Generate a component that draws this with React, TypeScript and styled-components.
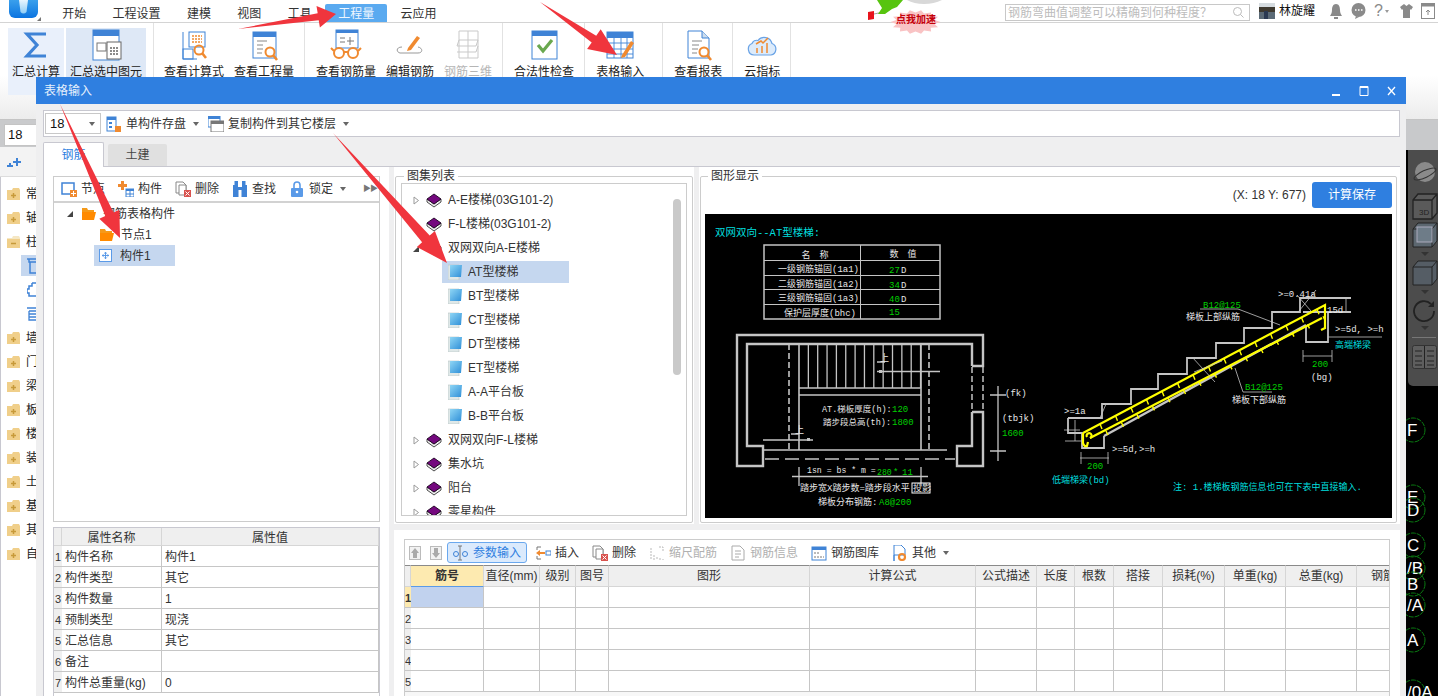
import React from "react";
import styled, { createGlobalStyle } from "styled-components";

const Global = createGlobalStyle`
  html, body { margin: 0; padding: 0; background: #fff; overflow: hidden; }
  * { box-sizing: border-box; }
  body { font: 12px/16px "Liberation Sans", "Noto Sans CJK SC", sans-serif; color: #222; }
`;

const Page = styled.div`position: relative; width: 1438px; height: 696px; overflow: hidden; background: #fff;`;

/* ---------- top bar ---------- */
const TopBar = styled.header`display: flex; align-items: stretch; height: 23px; border-bottom: 1px solid #d4d4d4; background: #fff; padding-right: 3px;`;
const LogoBox = styled.div`width: 49px; flex: none; padding-left: 9px;`;
const Tabs = styled.nav`display: flex; padding-top: 4px; margin-left: 0;`;
const MenuTab = styled.div<{ $active?: boolean }>`
  padding: 2px 13.2px 0;
  color: ${p => (p.$active ? "#eef6ff" : "#333")};
  background: ${p => (p.$active ? "#5aaaf0" : "transparent")};
  border-radius: 2px 2px 0 0;
`;
const SpeedWrap = styled.div`position: relative; width: 75px; margin-left: auto; margin-right: 63px; flex: none;`;
const SpeedArt = styled.svg`position: absolute; left: 0; top: 0; z-index: 2; overflow: visible;`;
const SearchBox = styled.div`
  width: 245px; height: 17px; margin-top: 4px; border: 1px solid #c8c8c8; display: flex; align-items: center;
  justify-content: space-between; padding: 0 4px 0 2px; color: #bcbcbc; flex: none; background: #fff;
`;
const UserName = styled.div`display: flex; align-items: center; gap: 4px; margin-left: 9px; width: 70px; color: #111;`;
const SysIcons = styled.div`display: flex; align-items: center; gap: 8px; color: #8a8a8a;`;
const QMark = styled.span`display: flex; align-items: center; gap: 2px; font-size: 16px; color: #8a8a8a; width: 18px;`;
const TinyCaret = styled.span`width: 0; height: 0; border: 2.5px solid transparent; border-top: 3px solid #999; border-bottom: 0;`;

/* ---------- ribbon ---------- */
const Ribbon = styled.div`
  display: flex; height: 97px; border-bottom: 1px solid #c4c4c4; padding-left: 8px;
  background: linear-gradient(#fff 0, #fff 55%, #ececec 100%);
`;
const RibbonGroup = styled.div<{ $pl?: number; $pr?: number; $gap?: number }>`
  display: flex; gap: ${p => p.$gap ?? 10}px; padding: 5px ${p => p.$pr ?? 10}px 0 ${p => p.$pl ?? 11}px; border-right: 1px solid #e2e2e2; height: 70px;
`;
const RibbonItem = styled.div<{ $bg?: string; $pad?: number; $muted?: boolean }>`
  display: flex; flex-direction: column; align-items: center; gap: 3px; height: 67px; padding: 1px ${p => p.$pad ?? 0}px 0;
  background: ${p => p.$bg ?? "transparent"}; color: ${p => (p.$muted ? "#b5b5b5" : "#222")}; white-space: nowrap;
`;

/* ---------- docks behind the dialog ---------- */
const Under = styled.div`display: flex; justify-content: space-between; height: 576px;`;
const LeftDock = styled.aside`width: 37px; display: flex; flex-direction: column; background: #c9cacc; padding-top: 4px;`;
const FloorInput = styled.div`height: 22px; margin-left: 4px; background: #fff; border: 1px solid #c4c4c4; padding: 2px 0 0 3px; font-size: 13px; color: #111;`;
const SideHead = styled.div`height: 30px; margin-top: 1px; background: #f3f3f3; padding: 9px 0 0 7px; border-bottom: 1px solid #ddd;`;
const SideTree = styled.ul`flex: 1; list-style: none; margin: 0; padding: 5px 0 0; background: #fff; border-left: 1px solid #c8c8d0; overflow: hidden;`;
const SideRow = styled.li<{ $sel?: boolean }>`display: flex; align-items: center; gap: 5px; height: 24px; padding-left: 5px; color: #222; white-space: nowrap;`;
const SideChild = styled.li<{ $sel?: boolean }>`
  display: flex; align-items: center; height: ${p => (p.$sel ? 21 : 24)}px; margin: ${p => (p.$sel ? "1px 0 2px 20px" : "0 0 0 20px")}; padding-left: 6px;
  background: ${p => (p.$sel ? "#c5d7ef" : "transparent")};
`;
const RightDock = styled.aside`width: 32px; display: flex; flex-direction: column; background: #000;`;
const GrayStrip = styled.div`height: 30px; background: #c8c9cb; flex: none;`;
const ViewBar = styled.div`
  height: 236px; margin-left: 2px; background: #4c4c4c; border-radius: 0 0 0 5px; display: flex; flex-direction: column; align-items: flex-start; padding: 10px 0 0 4px; flex: none;
`;
const ViewSep = styled.div`width: 24px; height: 1px; background: #777; margin: 3px 0 7px;`;
const GridArt = styled.svg`display: block; margin-left: -6px; overflow: visible; flex: none;`;

/* ---------- dialog window ---------- */
const Dialog = styled.section`
  position: absolute; left: 36px; top: 77px; width: 1370px; height: 619px; z-index: 3; display: flex; flex-direction: column; background: #efeff0;
`;
const TitleBar = styled.div`height: 27px; flex: none; background: #2f7fe0; color: #e6f0fc; display: flex; align-items: center; padding-left: 8px;`;
const WinButtons = styled.div`display: flex; gap: 15px; margin-left: auto; padding-right: 8px; align-items: center;`;
const DialogBody = styled.div`flex: 1; min-height: 0; display: flex; flex-direction: column; padding: 6px 6px 0 7px;`;
const MainToolbar = styled.div`height: 27px; flex: none; background: #fff; border: 1px solid #c8c8d0; display: flex; align-items: center; gap: 9px; padding-left: 1px;`;
const Combo = styled.div`width: 56px; height: 21px; margin-right: -4px; font-size: 13px; border: 1px solid #c8c8c8; display: flex; align-items: center; justify-content: space-between; padding: 0 5px 0 4px; color: #111;`;
const ToolBtn = styled.div<{ $muted?: boolean; $gap?: number }>`
  display: flex; align-items: center; gap: ${p => p.$gap ?? 4}px; color: ${p => (p.$muted ? "#b0b0b0" : "#333")}; white-space: nowrap; flex: none;
`;
const Caret = styled.span`width: 0; height: 0; border: 3px solid transparent; border-top: 4px solid #666; border-bottom: 0; margin-left: 3px;`;
const TabStrip = styled.div`height: 25px; margin-top: 4px; display: flex; align-items: flex-end; gap: 4px; flex: none;`;
const PageTab = styled.div<{ $active?: boolean }>`
  width: ${p => (p.$active ? 61 : 59)}px; height: ${p => (p.$active ? 25 : 22)}px; display: flex; align-items: center; justify-content: center;
  background: ${p => (p.$active ? "#fff" : "#e0e0e0")}; color: ${p => (p.$active ? "#2f7fe0" : "#444")};
  border: ${p => (p.$active ? "1px solid #c8c8d0" : "0")}; border-bottom: 0; margin-bottom: ${p => (p.$active ? -1 : 0)}px; position: relative; z-index: 1;
  border-radius: 2px 2px 0 0;
`;
const Content = styled.div`flex: 1; min-height: 0; display: grid; grid-template-columns: 345px 1fr; background: #fff; border-top: 1px solid #c8c8d0; border-left: 1px solid #c8c8d0;`;
const LeftCol = styled.div`padding: 9px 9px 0 9px; display: flex; flex-direction: column; border-right: 0;`;
const TreePanel = styled.div`height: 346px; border: 1px solid #ccc; display: flex; flex-direction: column; flex: none;`;
const PanelTools = styled.div`height: 26px; flex: none; border-bottom: 2px solid #d2d2d2; display: flex; align-items: center; gap: 13px; padding-left: 7px;`;
const More = styled.span`margin-left: auto; padding-right: 2px; color: #777; font-size: 8px; letter-spacing: -1px;`;
const TreeBody = styled.div`flex: 1; padding-top: 0; overflow: hidden;`;
const TreeLine = styled.div<{ $indent: number; $sel?: boolean; $width?: number }>`
  display: flex; align-items: center; gap: 7px; height: 21px; margin-left: ${p => p.$indent}px; padding-left: 5px;
  width: ${p => (p.$width ? `${p.$width}px` : "auto")}; background: ${p => (p.$sel ? "#c5d7ef" : "transparent")}; color: #333;
`;
const PropWrap = styled.div`margin-top: 5px; border: 1px solid #c8c8d0; border-bottom: 0; flex: 1; min-height: 0; overflow: hidden; `;
const RightCol = styled.div`border-left: 5px solid #efeff0; display: flex; flex-direction: column; min-width: 0;`;
const TopRow = styled.div`height: 357px; flex: none; display: flex;`;
const MidCol = styled.div`width: 300px; flex: none; padding: 2px 1px 0;`;
const Splitter = styled.div`width: 5px; flex: none; background: #efeff0;`;
const ShowCol = styled.div`flex: 1; min-width: 0; padding: 2px 3px 0 1px;`;
const Group = styled.fieldset<{ $pad: number }>`margin: 0; height: 354px; border: 1px solid #ccc; border-radius: 2px; min-width: 0; padding: 0 ${p => p.$pad}px 6px; display: flex; flex-direction: column;`;
const GroupTitle = styled.legend`margin-left: 3px; padding: 0 3px; line-height: 14px; color: #333;`;
const ListBox = styled.div`position: relative; flex: 1; min-height: 0; border: 1px solid #ccc; padding-top: 4px; overflow: hidden; display: flex; flex-direction: column;`;
const ListRow = styled.div`display: flex; flex: none; align-items: center; height: 24px; padding-left: 11px; color: #333; white-space: nowrap;`;
const Spacer = styled.span<{ $w: number }>`display: inline-block; width: ${p => p.$w}px; flex: none;`;
const ListLabel = styled.span`margin-left: 6px;`;
const ListChild = styled.div<{ $sel?: boolean }>`
  display: flex; flex: none; align-items: center; gap: 5px; height: 22px; margin: 1px 0 1px 40px; width: 127px; padding-left: 6px; color: #333;
  background: ${p => (p.$sel ? "#c5d7ef" : "transparent")};
`;
const ScrollThumb = styled.div`position: absolute; right: 5px; top: 15px; width: 8px; height: 176px; border-radius: 4px; background: #c9c9c9;`;
const ShowHead = styled.div`height: 26px; flex: none; display: flex; justify-content: flex-end; align-items: center; gap: 6px; margin-top: -1px; color: #333;`;
const SaveBtn = styled.div`width: 80px; height: 26px; border-radius: 3px; background: #2f7fe0; color: #fff; display: flex; align-items: center; justify-content: center;`;
const Drawing = styled.svg`display: block; margin-top: 6px; background: #000; flex: none;`;
const HSplit = styled.div`height: 6px; flex: none; background: #efeff0;`;
const BottomPanel = styled.div`flex: 1; min-height: 0; padding: 9px 10px 0; background: #fff;`;
const BarBox = styled.div`height: 100%; border: 1px solid #ccc; border-bottom: 0; overflow: hidden; background: #f7f7f7;`;
const GridTools = styled.div`height: 25px; background: #fff; display: flex; align-items: center; padding-left: 4px;`;
const UpDown = styled.div`display: flex; gap: 9px; margin-right: 5px;`;
const ActiveBtn = styled.div`
  width: 80px; height: 21px; margin-right: 8px; border: 1px solid #6aa8ee; border-radius: 3px; background: #dbeafc; color: #2f7fe0;
  display: flex; align-items: center; gap: 4px; padding-left: 4px; flex: none;
`;
const ToolRun = styled.div`display: flex; align-items: center; gap: 13px;`;
const DataTable = styled.table<{ $w: number }>`
  table-layout: fixed; width: ${p => p.$w}px; border-collapse: separate; border-spacing: 0; background: #fff;
  font-size: 12px; line-height: 14px;
`;
const Th = styled.th<{ $hl?: boolean }>`
  height: 18px; padding: 2px 0 0; font-weight: ${p => (p.$hl ? 700 : 400)}; color: #333; white-space: nowrap; overflow: hidden;
  background: ${p => (p.$hl ? "#fdeab0" : "#efefef")}; border-right: 1px solid #d6d6d6; border-bottom: 1px solid ${p => (p.$hl ? "#5a9ae8" : "#d6d6d6")};
`;
const DarkTh = styled(Th)`height: 22px; padding: 0; border-top: 1px solid #8a8a8a;`;
const Td = styled.td<{ $sel?: boolean }>`
  height: 21px; padding: 2px 0 0 3px; color: #333; white-space: nowrap; overflow: hidden;
  background: ${p => (p.$sel ? "#c1d2ee" : "#fff")}; border-right: 1px solid #c6c6c6; border-bottom: 1px solid #c6c6c6;
`;
const NumTd = styled.td<{ $hl?: boolean }>`
  padding: 2px 0 0; height: 21px; overflow: hidden; text-align: center; background: ${p => (p.$hl ? "#fdeab0" : "#efefef")}; font-weight: ${p => (p.$hl ? 700 : 400)};
  color: #333; border-bottom: 1px solid #c6c6c6; font-size: 11px;
`;
const ArrowLayer = styled.svg`position: absolute; left: 0; top: 0; z-index: 5; pointer-events: none;`;

/* ---------- icons ---------- */
const B = "#3f83d6", O = "#f08a30";
const Ico = ({ s = 32, children }: { s?: number; children: React.ReactNode }) => (
  <svg width={s} height={s} viewBox="0 0 32 32" style={{ flex: "none", display: "block" }}>{children}</svg>
);
const Lens = ({ x = 22, y = 23 }: { x?: number; y?: number }) => (
  <g fill="none" stroke={O} strokeWidth="2"><circle cx={x} cy={y} r="4.5" /><path d={`M${x + 3} ${y + 3}l4 5`} strokeWidth="2.6" /></g>
);
const Doc = () => (
  <g><rect x="5" y="3" width="23" height="26" fill="#fff" stroke={B} /><rect x="5" y="3" width="23" height="5" fill={B} />
    <path d="M9 12h10M9 16h6M9 20h6M9 24h5" stroke="#888" /></g>
);
const icons: Record<string, React.ReactNode> = {
  sum: <Ico><path d="M26 5H7l10 11L7 27h19" fill="none" stroke={B} strokeWidth="3.2" /></Ico>,
  calc: <Ico><rect x="3" y="1" width="26" height="30" fill="#fff" stroke={B} /><rect x="3" y="1" width="26" height="6" fill={B} /><rect x="7" y="14" width="9" height="8" fill="none" stroke="#777" /><rect x="17" y="13" width="14" height="17" fill="#fff" stroke="#666" /><path d="M20 19h8M20 22h8M20 25h8" stroke="#666" strokeDasharray="2 1" strokeWidth="1.6" /></Ico>,
  formula: <Ico><path d="M5 3v27h14" fill="none" stroke={B} /><rect x="5" y="20" width="10" height="10" fill="none" stroke={B} /><rect x="11" y="3" width="16" height="15" fill="#fff" stroke={B} /><path d="M14 7h10M14 10h10M14 13h10" stroke={O} strokeWidth="1.6" strokeDasharray="2 1" /><Lens x={21} y={21} /></Ico>,
  qty: <Ico><Doc /><Lens /></Ico>,
  rebar: <Ico><rect x="6" y="1" width="22" height="18" fill="#fff" stroke={B} /><rect x="6" y="1" width="22" height="3" fill={B} /><path d="M10 9h5M10 13h5M20 8v8M17 12h7" stroke="#777" /><g fill="none" stroke={O} strokeWidth="2"><circle cx="9" cy="24" r="5" /><circle cx="23" cy="24" r="5" /><path d="M14 23h4M4 22L1 19M28 22l3-3" /></g></Ico>,
  edit: <Ico><path d="M6 24c-4-1-4-6 2-6M17 24H6M24 18c5 1 5 6 0 6h-7" fill="none" stroke="#999" /><path d="M14 19l9-12 3 2-9 12-4 1z" fill={O} /></Ico>,
  rebar3d: <Ico><path d="M7 2v27M16 2v27M26 2v27M7 2h19M7 11l-2 6h19l2-6zM5 23h19l2-6M7 29h19" fill="none" stroke="#c9c9c9" /></Ico>,
  check: <Ico><rect x="4" y="2" width="25" height="28" fill="#fff" stroke={B} /><rect x="4" y="2" width="25" height="5" fill={B} /><path d="M10 16l5 6 9-11" fill="none" stroke="#6aa84f" strokeWidth="3.2" /></Ico>,
  table: <Ico><rect x="3" y="3" width="26" height="26" fill="#fff" stroke={B} /><rect x="3" y="3" width="26" height="6" fill={B} /><path d="M3 14h26M3 20h26M3 25h26M10 9v20M17 9v20M23 9v20" stroke={B} strokeWidth=".9" /><path d="M18 26l9-14 3 2-9 14-4 1z" fill={O} /></Ico>,
  report: <Ico><path d="M6 2h14l7 7v20H6z" fill="#fff" stroke={B} /><path d="M20 2v7h7" fill="#cde" stroke={B} /><path d="M10 12h10M10 16h7M10 20h6M10 24h5" stroke="#888" /><Lens /></Ico>,
  cloud: <Ico><path d="M8 26a6 6 0 0 1-2-11.5 5 5 0 0 1 6-3 8 8 0 0 1 14 3 6 6 0 0 1-1 11.5z" fill="#dcebfb" stroke="#6aa3e6" strokeWidth="1.2" /><path d="M11 24v-5M16 24v-7M21 24v-10M10 15l5-3 2 2 5-5" fill="none" stroke={O} strokeWidth="1.5" /></Ico>,
};

const S = ({ children }: { children: React.ReactNode }) => (
  <svg width="16" height="16" viewBox="0 0 16 16" style={{ flex: "none", display: "block" }}>{children}</svg>
);
const tool: Record<string, React.ReactNode> = {
  node: <S><rect x="1" y="2" width="12" height="11" fill="none" stroke={B} strokeWidth="1.5" /><rect x="9" y="9" width="7" height="7" fill={O} /><path d="M12.5 10v5M10 12.5h5" stroke="#fff" /></S>,
  part: <S><path d="M3 0h3v3h3v3H6v3H3V6H0V3h3z" fill={O} /><rect x="8" y="8" width="8" height="8" fill="#fff" stroke={B} /><rect x="8" y="8" width="8" height="2" fill={B} /><path d="M12 10v6M8 13h8" stroke={B} /></S>,
  del: <S><path d="M1 1h7l3 3v8H1z" fill="#fff" stroke="#888" /><path d="M4 4h7v10H4z" fill="#fff" stroke="#888" /><rect x="9" y="9" width="7" height="7" fill="#d9534f" /><path d="M10.5 10.5l4 4M14.5 10.5l-4 4" stroke="#fff" /></S>,
  find: <S><path d="M1 4h5v2h4V4h5v12H9.5V9h-3v7H1z" fill={B} /><rect x="2.5" y="0" width="3.5" height="4" fill={B} /><rect x="10" y="0" width="3.5" height="4" fill={B} /></S>,
  lock: <S><rect x="2" y="7" width="12" height="9" rx="1" fill="#5a9ae8" /><path d="M5 7V4a3 3 0 0 1 6 0v3" fill="none" stroke="#5a9ae8" strokeWidth="1.6" /><circle cx="8" cy="11" r="1.3" fill="#fff" /></S>,
  save: <S><rect x="1" y="1" width="9" height="14" fill="#fff" stroke={B} /><rect x="1" y="1" width="9" height="3" fill={B} /><rect x="3" y="6" width="3" height="2" fill={B} /><rect x="3" y="10" width="3" height="2" fill={B} /><rect x="9" y="10" width="6" height="6" fill={O} /></S>,
  copy: <S><rect x="0" y="0" width="12" height="11" fill="#fff" stroke={B} /><rect x="0" y="0" width="12" height="3" fill={B} /><rect x="3" y="5" width="13" height="11" fill="#fff" stroke="#777" /><rect x="3" y="5" width="13" height="3" fill="#777" /></S>,
  insert: <S><path d="M2 2h4M2 14h4M2 2v3M2 11v3" stroke="#777" fill="none" /><path d="M1 8l4-3v2h5v2H5v2z" fill={O} /><rect x="11" y="6" width="5" height="4" fill="#fff" stroke={B} /></S>,
  scale: <S><path d="M2 3v12M5 10v5M8 12v3M11 13v2M14 14v1M10 2h4v4" stroke="#b9b9b9" fill="none" strokeDasharray="2 1" /></S>,
  info: <S><path d="M2 1h8l4 4v10H2z" fill="#fff" stroke="#aaa" /><path d="M5 6h6M5 9h6M5 12h4" stroke="#aaa" /></S>,
  lib: <S><rect x="1" y="2" width="14" height="13" fill="#fff" stroke={B} /><rect x="1" y="2" width="14" height="3" fill={B} /><path d="M3 8h5M3 12h10" stroke="#777" strokeDasharray="2 1" /></S>,
  other: <S><path d="M2 0h7l4 4v6H2v6" fill="#fff" stroke={B} /><path d="M2 0v16" stroke={B} /><circle cx="10" cy="12" r="3" fill="none" stroke={O} strokeWidth="2.2" /></S>,
};

const PlusFolder = ({ open }: { open?: boolean }) => (
  <svg width="15" height="14" viewBox="0 0 15 14" style={{ flex: "none" }}>
    <path d="M1 3h5l1-2h6l1 2v10H1z" fill={open ? "#f5e7c4" : "#f0cf8a"} />
    <rect x="1" y="4" width="13" height="9" fill="#f0cf8a" />
    <path d={open ? "M5 8.5h5" : "M5 8.5h5M7.5 6v5"} stroke="#c79a3a" strokeWidth="1.5" />
  </svg>
);
const OrangeFolder = () => (
  <svg width="15" height="13" viewBox="0 0 15 13" style={{ flex: "none" }}>
    <path d="M1 1h5l1 2h6v2H1z" fill="#f59a1a" /><path d="M1 5h14l-2 8H1z" fill="#ff8a00" />
  </svg>
);
const PartIcon = () => (
  <svg width="14" height="14" viewBox="0 0 14 14" style={{ flex: "none" }}>
    <rect x=".5" y=".5" width="12" height="12" fill="#fff" stroke="#5a9ae8" /><path d="M6.5 3v7M3 6.5h7" stroke="#5a9ae8" /><circle cx="6.5" cy="6.5" r="2.5" fill="none" stroke="#5a9ae8" strokeDasharray="1 1" />
  </svg>
);
const Book = () => (
  <svg width="16" height="15" viewBox="0 0 16 15" style={{ flex: "none" }}>
    <path d="M1 6v3l7 5 7-5V6l-7 5z" fill="#eee" stroke="#222" strokeWidth=".8" />
    <path d="M1 6l7-5 7 5-7 5z" fill="#74087e" stroke="#1c0620" strokeWidth=".9" />
  </svg>
);
const Note = () => (
  <svg width="15" height="16" viewBox="0 0 15 16" style={{ flex: "none" }}>
    <defs><linearGradient id="nt" x1="0" x2="1" y1="0" y2="1"><stop offset="0" stopColor="#8fd6f5" /><stop offset="1" stopColor="#2f8fd8" /></linearGradient></defs>
    <path d="M0 1h11v15H0z" fill="#dfe8e8" stroke="#b8c4c4" strokeWidth=".6" /><path d="M2 1h12l-1 12H2z" fill="url(#nt)" />
  </svg>
);
const Tri = ({ open }: { open?: boolean }) => (
  <svg width="7" height="9" viewBox="0 0 7 9" style={{ flex: "none" }}>
    {open ? <path d="M0 8l6-6v6z" fill="#444" /> : <path d="M1 1l4.5 3.5L1 8z" fill="#fff" stroke="#999" />}
  </svg>
);

/* ---------- data ---------- */
const ribbon = [
  { pl: 0, pr: 7, gap: 2, items: [{ k: "sum", t: "汇总计算", bg: "#e9f0fb", pad: 4 }, { k: "calc", t: "汇总选中图元", bg: "#dee8f6", pad: 4 }] },
  { pl: 10, items: [{ k: "formula", t: "查看计算式" }, { k: "qty", t: "查看工程量" }] },
  { items: [{ k: "rebar", t: "查看钢筋量" }, { k: "edit", t: "编辑钢筋" }, { k: "rebar3d", t: "钢筋三维", muted: true }] },
  { items: [{ k: "check", t: "合法性检查" }] },
  { pr: 18, items: [{ k: "table", t: "表格输入" }] },
  { items: [{ k: "report", t: "查看报表" }] },
  { items: [{ k: "cloud", t: "云指标" }] },
] as { pl?: number; pr?: number; gap?: number; items: { k: string; t: string; bg?: string; pad?: number; muted?: boolean }[] }[];

const gridCols: [string, number][] = [["", 6], ["筋号", 73], ["直径(mm)", 56], ["级别", 36], ["图号", 33], ["图形", 201], ["计算公式", 166], ["公式描述", 61], ["长度", 38], ["根数", 39], ["搭接", 49], ["损耗(%)", 62], ["单重(kg)", 61], ["总重(kg)", 71], ["钢筋", 53]];
const props = [["构件名称", "构件1"], ["构件类型", "其它"], ["构件数量", "1"], ["预制类型", "现浇"], ["汇总信息", "其它"], ["备注", ""], ["构件总重量(kg)", "0"]];

/* ---------- red arrows ---------- */
const arrowPts = (x1: number, y1: number, x2: number, y2: number, head = 24, wing = 12, shaft = 4.5) => {
  const dx = x2 - x1, dy = y2 - y1, l = Math.hypot(dx, dy), ux = dx / l, uy = dy / l, nx = -uy, ny = ux;
  const bx = x2 - ux * head, by = y2 - uy * head;
  const p = (x: number, y: number) => `${x.toFixed(1)},${y.toFixed(1)}`;
  return [p(x1, y1), p(bx + nx * shaft, by + ny * shaft), p(bx + nx * wing, by + ny * wing), p(x2, y2), p(bx - nx * wing, by - ny * wing), p(bx - nx * shaft, by - ny * shaft)].join(" ");
};

/* ---------- CAD drawing ---------- */
const CW = "#e6e6e6", CG = "#00cf00", CC = "#00dede", CL = "#c4c4c4";
const T = ({ x, y, c = CW, s = 9, children, a }: { x: number; y: number; c?: string; s?: number; children: React.ReactNode; a?: "middle" }) => (
  <text x={x} y={y} fill={c} fontSize={s} textAnchor={a} fontFamily={'"Liberation Mono", "Noto Sans CJK SC", monospace'}>{children}</text>
);
const stairs = "M1068 418H1102V404H1131V389H1158V374H1187V358H1216V343H1244V328H1272V312H1300V298H1351M1303 312H1351M1068 418V433H1082V448H1104V436M1306 325V342H1328V312";
const treads = Array.from({ length: 13 }, (_, i) => 799 + (i + 1) * 9.35);
const ticks = Array.from({ length: 15 }, (_, i) => i);

const CadDrawing = () => (
  <Drawing width={687} height={304} viewBox="705 214 687 304">
    <T x={715} y={236} c={CC} s={10.5}>双网双向--AT型楼梯:</T>
    <g fill="none" stroke={CL}>
      <rect x="764" y="245" width="176" height="74" strokeWidth="1.5" />
      <path d="M860.5 245V319M764 260.5H940M764 275.5H940M764 289.5H940M764 304.5H940" />
    </g>
    <T x={815} y={258} a="middle">名　称</T><T x={903} y={257} a="middle">数　值</T>
    {[["一级钢筋锚固(1a1)", "27", 272], ["二级钢筋锚固(1a2)", "34", 287], ["三级钢筋锚固(1a3)", "40", 301]].map(([a, b, y]) => (
      <g key={a as string}><T x={778} y={(y as number)}>{a}</T><T x={889} y={(y as number) + 1} c={CG}>{b}</T><T x={901} y={(y as number) + 1}>D</T></g>
    ))}
    <T x={784} y={316}>保护层厚度(bhc)</T><T x={889} y={315} c={CG}>15</T>

    <g fill="none" stroke={CL} strokeWidth="2.4">
      <path d="M972 366H983V335H737V466H763V446H747V344H972V366" />
      <path d="M972 412H983V466H957V446H972V412" />
      <path d="M972 367V411M983 367V411" strokeDasharray="6 3" strokeWidth="1.5" />
    </g>
    <g fill="none" stroke={CL} strokeWidth="1.3">
      <path d="M799 344V450M921 344V450" strokeWidth="1.6" />
      <path d="M789 344V450M929 344V450" strokeDasharray="6 3" strokeWidth="1.6" />
      {treads.map(x => <path key={x} d={`M${x} 344V388`} />)}
      <path d="M799 388H921M799 395H921" strokeWidth="1.6" />
      <path d="M763 450H947" /><path d="M765 459H955" strokeDasharray="14 6" />
      <path d="M877 371.5H940M877 362H885M763 440H813M791 434H799" />
      <path d="M998 386V461M990 395H1006M990 451H1006M799 467V486M921 467V486M792 476.5H928" />
    </g>
    <rect x="879" y="370" width="3" height="3" fill={CL} /><rect x="807" y="438" width="3" height="3" fill={CL} />
    <T x={880} y={361}>上</T><T x={795} y={433}>上</T>
    <T x={822} y={412} s={8.5}>AT.梯板厚度(h):</T><T x={892} y={412} c={CG}>120</T>
    <T x={823} y={425} s={8.5}>踏步段总高(th):</T><T x={892} y={425} c={CG}>1800</T>
    <T x={1005} y={396}>(fk)</T><T x={1002} y={421}>(tbjk)</T><T x={1002} y={436} c={CG}>1600</T>
    <T x={807} y={473} s={8.2}>1sn = bs * m =</T><T x={877} y={475} s={8.2} c={CG}>280</T><T x={893} y={475} c={CG}>*</T><T x={902} y={475} c={CG}>11</T>
    <T x={800} y={491}>踏步宽X踏步数=踏步段水平</T><rect x="912" y="483" width="18" height="10" fill="none" stroke="#fff" /><T x={913} y={491}>投影</T>
    <T x={818} y={505}>梯板分布钢筋:</T><T x={879} y={505} c={CG}>A8@200</T>

    <path d={stairs} fill="none" stroke={CL} strokeWidth="1.8" />
    <path d="M1104 436L1306 325" fill="none" stroke={CL} strokeWidth="2.4" />
    <g fill="none" stroke="#ffff00" strokeWidth="2.2">
      <path d="M1083 433L1325 305V328L1321 330" /><path d="M1090 438L1322 318" />
      <path d="M1083 433V443Q1084 447 1087 446L1088 442" /><path d="M1090 438a2.5 2.5 0 1 0 -3 -1" />
      {ticks.map(i => { const x = 1100 + i * 15.5, y = 424 - i * 8.2; return <path key={i} strokeWidth="1.4" d={`M${x} ${y}l2 5M${x + 8} ${y + 11}l-2-4`} />; })}
    </g>
    <g fill="none" stroke={CL} strokeWidth=".8">
      <path d="M1200 309H1238L1280 325M1235 368L1243 392H1272M1303 356H1332M1303 350V362M1332 350V362M1080 458H1109M1081 452V464M1108 452V464M1328 337H1382" />
      <path d="M1192 357L1215 382M1194 372L1222 361M1297 295L1311 311M1299 311L1316 290M1106 404L1100 418M1064 430H1080M1075 420V441M1065 441H1082M1346 298V312M1334 298H1351" />
    </g>
    <T x={1203} y={308} c={CG}>B12@125</T><T x={1186} y={320}>梯板上部纵筋</T>
    <T x={1278} y={297}>&gt;=0.41a</T><T x={1327} y={313}>15d</T>
    <T x={1335} y={332}>&gt;=5d, &gt;=h</T><T x={1335} y={348} c={CC}>高端梯梁</T>
    <T x={1312} y={367} c={CG}>200</T><T x={1311} y={380}>(bg)</T>
    <T x={1245} y={390} c={CG}>B12@125</T><T x={1232} y={403}>梯板下部纵筋</T>
    <T x={1064} y={414}>&gt;=1a</T><T x={1112} y={452}>&gt;=5d,&gt;=h</T>
    <T x={1087} y={469} c={CG}>200</T><T x={1052} y={483} c={CC}>低端梯梁(bd)</T>
    <T x={1173} y={490} c={CC}>注: 1.楼梯板钢筋信息也可在下表中直接输入.</T>
  </Drawing>
);

/* ---------- App ---------- */
const burst = Array.from({ length: 28 }, (_, i) => {
  const a = (i / 28) * Math.PI * 2, k = i % 2 ? 0.78 : 1;
  return `${(48.5 + Math.cos(a) * 25 * k).toFixed(1)},${(22 + Math.sin(a) * 12 * k).toFixed(1)}`;
}).join(" ");

export default function App() {
  return (
    <Page>
      <Global />
      <TopBar>
        <LogoBox>
          <svg width="40" height="23" viewBox="0 0 40 23">
            <defs>
              <linearGradient id="lg" x1="0" x2="0" y1="0" y2="1"><stop offset="0" stopColor="#3aa0ec" /><stop offset="1" stopColor="#0b74e0" /></linearGradient>
              <linearGradient id="lw" x1="0" x2="0" y1="0" y2="1"><stop offset="0" stopColor="#e8f6ff" /><stop offset="1" stopColor="#8fcdf5" /></linearGradient>
            </defs>
            <path d="M0 0h29v12a6 6 0 0 1-6 6H6a6 6 0 0 1-6-6z" fill="url(#lg)" />
            <path d="M10 0h9l-1.5 12q-3 3-6 0z" fill="url(#lw)" /><path d="M28 21h4v-4z" fill="#777" />
          </svg>
        </LogoBox>
        <Tabs>
          {["开始", "工程设置", "建模", "视图", "工具", "工程量", "云应用"].map(t => <MenuTab key={t} $active={t === "工程量"}>{t}</MenuTab>)}
        </Tabs>
        <SpeedWrap>
          <SpeedArt width="75" height="36" viewBox="0 0 75 36">
            <path d="M1 12l6-1 0 8-6 1z" fill="#e8141c" />
            <path d="M7 14l14-3" stroke="#888" strokeWidth=".8" />
            <path d="M10 0h26l-6 7-5 2-7 5-7 0 4-6z" fill="#57c40f" />
            <path d="M40 0h35q-8 4-18 4-10 0-17-4z" fill="#d8d8d8" />
            <polygon points={burst} fill="#f9c3c4" />
            <text x="49" y="23" fill="#c4000a" fontSize="10" fontWeight="700" textAnchor="middle" fontFamily={'"Noto Sans CJK SC", sans-serif'}>点我加速</text>
          </SpeedArt>
        </SpeedWrap>
        <SearchBox>
          <span>钢筋弯曲值调整可以精确到何种程度？</span>
          <svg width="13" height="13" viewBox="0 0 13 13"><circle cx="5.5" cy="5.5" r="4" fill="none" stroke="#bbb" /><path d="M8.5 8.5l3 3" stroke="#bbb" /></svg>
        </SearchBox>
        <UserName>
          <svg width="16" height="16" viewBox="0 0 16 16" style={{ flex: "none" }}>
            <rect width="16" height="16" fill="#d6dce0" /><rect y="4" width="16" height="5" fill="#3f3a30" /><rect y="9" width="16" height="7" fill="#5b6a76" /><rect x="5" y="8" width="4" height="8" fill="#2b3a52" />
          </svg>
          <span>林旋耀</span>
        </UserName>
        <SysIcons>
          <svg width="14" height="17" viewBox="0 0 14 17"><path d="M7 1c3 0 4 3 4 6 0 3 1 4 2 6H1c1-2 2-3 2-6 0-3 1-6 4-6z" fill="#8a8a8a" /><rect x="5" y="14" width="4" height="2" fill="#8a8a8a" /></svg>
          <svg width="15" height="16" viewBox="0 0 15 16"><circle cx="7.5" cy="7" r="7" fill="#8a8a8a" /><path d="M5 13l-1 3 4-2z" fill="#8a8a8a" /><path d="M4 7h1.5M7 7h1.5M10 7h1.5" stroke="#fff" strokeWidth="1.5" /></svg>
          <QMark>?<TinyCaret /></QMark>
          <svg width="13" height="14" viewBox="0 0 13 14"><path d="M4 0l2.5 2L9 0l4 3-2 3-1-1v9H3V5L2 6 0 3z" fill="#8a8a8a" /></svg>
          <svg width="14" height="16" viewBox="0 0 14 16"><rect x=".5" y=".5" width="13" height="15" fill="#fff" stroke="#8a8a8a" /><rect x=".5" y=".5" width="13" height="3" fill="#8a8a8a" /><path d="M7 12V7M5 9l2-2 2 2" fill="none" stroke="#8a8a8a" /></svg>
        </SysIcons>
      </TopBar>

      <Ribbon>
        {ribbon.map((g, i) => (
          <RibbonGroup key={i} $pl={g.pl} $pr={g.pr} $gap={g.gap}>
            {g.items.map(it => (
              <RibbonItem key={it.t} $bg={it.bg} $pad={it.pad} $muted={it.muted}>
                {icons[it.k]}
                <span>{it.t}</span>
              </RibbonItem>
            ))}
          </RibbonGroup>
        ))}
      </Ribbon>

      <Under>
        <LeftDock>
          <FloorInput>18</FloorInput>
          <SideHead>
            <svg width="14" height="10" viewBox="0 0 14 10"><path d="M9 0h2v3h3v2h-3v3H9V5H6V3h3z" fill="#3f83d6" /><path d="M2 5h2v2h2v2H0V7h2z" fill="#3f83d6" /></svg>
          </SideHead>
          <SideTree>
            <SideRow><PlusFolder /><span>常</span></SideRow>
            <SideRow><PlusFolder /><span>轴</span></SideRow>
            <SideRow><PlusFolder open /><span>柱</span></SideRow>
            <SideChild $sel><svg width="10" height="16" viewBox="0 0 10 16"><path d="M0 1h10M2 1v3h8M3 4v11h7" fill="none" stroke="#3f83d6" strokeWidth="1.5" /></svg></SideChild>
            <SideChild><svg width="10" height="16" viewBox="0 0 10 16"><path d="M5 1h5M5 1v3H2v3H0v4h2v3h8" fill="none" stroke="#3f83d6" strokeWidth="1.5" /></svg></SideChild>
            <SideChild><svg width="10" height="16" viewBox="0 0 10 16"><path d="M0 2h10M2 5h8M2 5v9h8M2 8h8M2 11h8" fill="none" stroke="#3f83d6" strokeWidth="1.3" /></svg></SideChild>
            {["墙", "门", "梁", "板", "楼", "装", "土", "基", "其", "自"].map(t => (
              <SideRow key={t}><PlusFolder /><span>{t}</span></SideRow>
            ))}
          </SideTree>
        </LeftDock>
        <RightDock>
          <GrayStrip />
          <ViewBar>
            <svg width="26" height="32" viewBox="0 0 26 32"><circle cx="13" cy="12" r="10" fill="#8a8a8a" /><ellipse cx="13" cy="14" rx="12" ry="3.5" fill="none" stroke="#333" transform="rotate(-25 13 14)" /></svg>
            <svg width="26" height="30" viewBox="0 0 26 30"><path d="M1 8l5-6h19v19l-5 6H1zM1 8h19v19M20 8l5-6" fill="#5a5a5a" stroke="#222" strokeWidth="1.3" /><text x="7" y="23" fill="#222" fontSize="8" fontFamily="Liberation Sans">3D</text></svg>
            <svg width="26" height="26" viewBox="0 0 26 26"><path d="M1 7l5-6h19v18l-5 6H1z" fill="#5c6770" stroke="#222" /><path d="M1 7h19v18M20 7l5-6" fill="none" stroke="#222" /><rect x="5" y="5" width="15" height="15" fill="#6e7c88" stroke="#aab" /></svg>
            <svg width="26" height="12" viewBox="0 0 26 12"><path d="M9 4h8l-4 4z" fill="#333" /></svg>
            <svg width="26" height="26" viewBox="0 0 26 26"><path d="M1 7l5-6h19v18l-5 6H1z" fill="#555d65" stroke="#222" /><path d="M1 7h19v18M20 7l5-6" fill="none" stroke="#222" /></svg>
            <svg width="26" height="12" viewBox="0 0 26 12"><path d="M9 4h8l-4 4z" fill="#333" /></svg>
            <svg width="26" height="26" viewBox="0 0 26 26"><path d="M22 13a10 10 0 1 1-3-7" fill="none" stroke="#222" strokeWidth="1.8" /><path d="M22 3v6h-6z" fill="#222" /></svg>
            <svg width="26" height="10" viewBox="0 0 26 10"><path d="M9 2h8l-4 4z" fill="#333" /></svg>
            <ViewSep />
            <svg width="26" height="24" viewBox="0 0 26 24"><rect x=".5" y=".5" width="24" height="23" rx="2" fill="#5e5e5e" stroke="#333" /><path d="M12.5 1v22M3 6h7M15 6h7M3 11h7M15 11h7M3 16h7M15 16h7M3 20h7M15 20h7" stroke="#222" /></svg>
          </ViewBar>
          <GridArt width="38" height="310" viewBox="1400 386 38 310">
            {([[430, "F"], [497, "E"], [510, "D"], [545, "C"], [568, "/B"], [584, "B"], [605, "/A"], [640, "A"], [692, "/0A"]] as [number, string][]).map(([y, t]) => (
              <g key={y}>
                <circle cx="1413" cy={y} r="12" fill="none" stroke="#0a7a12" strokeDasharray="5 1" />
                <text x="1407" y={y + 6} fill="#fff" fontSize="17" fontFamily={'"Liberation Sans", sans-serif'}>{t}</text>
              </g>
            ))}
          </GridArt>
        </RightDock>
      </Under>

      <Dialog>
        <TitleBar>
          <span>表格输入</span>
          <WinButtons>
            <svg width="13" height="12" viewBox="0 0 13 12"><rect x="3" y="9" width="8" height="2" fill="#fff" /></svg>
            <svg width="13" height="12" viewBox="0 0 13 12"><path d="M3 1.5h8v9H3z" fill="none" stroke="#fff" /><rect x="3" y="1" width="8" height="2" fill="#fff" /></svg>
            <svg width="13" height="12" viewBox="0 0 13 12"><path d="M3 2l7 8M10 2l-7 8" stroke="#fff" strokeWidth="1.3" /></svg>
          </WinButtons>
        </TitleBar>
        <DialogBody>
          <MainToolbar>
            <Combo><span>18</span><Caret /></Combo>
            <ToolBtn>{tool.save}<span>单构件存盘</span><Caret /></ToolBtn>
            <ToolBtn>{tool.copy}<span>复制构件到其它楼层</span><Caret /></ToolBtn>
          </MainToolbar>
          <TabStrip>
            <PageTab $active>钢筋</PageTab>
            <PageTab>土建</PageTab>
          </TabStrip>
          <Content>
            <LeftCol>
              <TreePanel>
                <PanelTools>
                  <ToolBtn>{tool.node}<span>节点</span></ToolBtn>
                  <ToolBtn>{tool.part}<span>构件</span></ToolBtn>
                  <ToolBtn>{tool.del}<span>删除</span></ToolBtn>
                  <ToolBtn>{tool.find}<span>查找</span></ToolBtn>
                  <ToolBtn>{tool.lock}<span>锁定</span><Caret /></ToolBtn>
                  <More>▶▶</More>
                </PanelTools>
                <TreeBody>
                  <TreeLine $indent={8}><Tri open /><OrangeFolder /><span>钢筋表格构件</span></TreeLine>
                  <TreeLine $indent={40}><OrangeFolder /><span>节点1</span></TreeLine>
                  <TreeLine $indent={40} $sel $width={81}><PartIcon /><span>构件1</span></TreeLine>
                </TreeBody>
              </TreePanel>
              <PropWrap>
                <DataTable $w={325}>
                  <colgroup><col width="8" /><col width="100" /><col /></colgroup>
                  <thead><tr><Th /><Th>属性名称</Th><Th>属性值</Th></tr></thead>
                  <tbody>
                    {props.map(([a, b], i) => (
                      <tr key={a}><NumTd>{i + 1}</NumTd><Td>{a}</Td><Td>{b}</Td></tr>
                    ))}
                  </tbody>
                </DataTable>
              </PropWrap>
            </LeftCol>
            <RightCol>
              <TopRow>
                <MidCol>
                  <Group $pad={5}>
                    <GroupTitle>图集列表</GroupTitle>
                    <ListBox>
                      {["A-E楼梯(03G101-2)", "F-L楼梯(03G101-2)"].map(t => (
                        <ListRow key={t}><Tri /><Spacer $w={6} /><Book /><ListLabel>{t}</ListLabel></ListRow>
                      ))}
                      <ListRow><Tri open /><Spacer $w={6} /><Book /><ListLabel>双网双向A-E楼梯</ListLabel></ListRow>
                      {["AT型楼梯", "BT型楼梯", "CT型楼梯", "DT型楼梯", "ET型楼梯", "A-A平台板", "B-B平台板"].map((t, i) => (
                        <ListChild key={t} $sel={i === 0}><Note /><span>{t}</span></ListChild>
                      ))}
                      {["双网双向F-L楼梯", "集水坑", "阳台", "零星构件"].map(t => (
                        <ListRow key={t}><Tri /><Spacer $w={6} /><Book /><ListLabel>{t}</ListLabel></ListRow>
                      ))}
                      <ScrollThumb />
                    </ListBox>
                  </Group>
                </MidCol>
                <Splitter />
                <ShowCol>
                  <Group $pad={4}>
                    <GroupTitle>图形显示</GroupTitle>
                    <ShowHead><span>(X: 18 Y: 677)</span><SaveBtn>计算保存</SaveBtn></ShowHead>
                    <CadDrawing />
                  </Group>
                </ShowCol>
              </TopRow>
              <HSplit />
              <BottomPanel>
                <BarBox>
                  <GridTools>
                    <UpDown>
                      <svg width="12" height="16" viewBox="0 0 12 16"><rect x=".5" y="1.5" width="11" height="13" fill="#f2f2f2" stroke="#bbb" /><path d="M6 3l4 5H8v5H4V8H2z" fill="#aaa" /></svg>
                      <svg width="12" height="16" viewBox="0 0 12 16"><rect x=".5" y="1.5" width="11" height="13" fill="#f2f2f2" stroke="#bbb" /><path d="M6 13l4-5H8V3H4v5H2z" fill="#aaa" /></svg>
                    </UpDown>
                    <ActiveBtn>
                      <svg width="17" height="16" viewBox="0 0 17 16"><path d="M8 1v14M6 1h4M6 15h4" stroke="#777" fill="none" /><circle cx="4" cy="9" r="2.5" fill="none" stroke="#3f83d6" /><circle cx="13" cy="9" r="2.5" fill="none" stroke="#3f83d6" /></svg>
                      <span>参数输入</span>
                    </ActiveBtn>
                    <ToolRun>
                      <ToolBtn>{tool.insert}<span>插入</span></ToolBtn>
                      <ToolBtn>{tool.del}<span>删除</span></ToolBtn>
                      <ToolBtn $muted>{tool.scale}<span>缩尺配筋</span></ToolBtn>
                      <ToolBtn $muted>{tool.info}<span>钢筋信息</span></ToolBtn>
                      <ToolBtn>{tool.lib}<span>钢筋图库</span></ToolBtn>
                      <ToolBtn>{tool.other}<span>其他</span><Caret /></ToolBtn>
                    </ToolRun>
                  </GridTools>
                  <DataTable $w={1005}>
                    <colgroup>{gridCols.map(([, w], i) => <col key={i} width={w} />)}</colgroup>
                    <thead>
                      <tr>{gridCols.map(([t], i) => <DarkTh key={i} $hl={i === 1}>{t}</DarkTh>)}</tr>
                    </thead>
                    <tbody>
                      {[1, 2, 3, 4, 5].map(n => (
                        <tr key={n}>
                          <NumTd $hl={n === 1}>{n}</NumTd>
                          {gridCols.slice(1).map((_, i) => <Td key={i} $sel={n === 1 && i === 0} />)}
                        </tr>
                      ))}
                    </tbody>
                  </DataTable>
                </BarBox>
              </BottomPanel>
            </RightCol>
          </Content>
        </DialogBody>
      </Dialog>

      <ArrowLayer width="1438" height="696" viewBox="0 0 1438 696">
        <g fill="#f0353d">
          <polygon points={arrowPts(238, 29, 336, 14, 18, 11, 3.5)} />
          <polygon points={arrowPts(540, 2, 617, 55, 28, 12, 4)} />
          <polygon points={arrowPts(60, 104, 120, 238, 26, 11, 4.5)} />
          <polygon points={arrowPts(333, 133, 447, 263, 32, 12, 5)} />
        </g>
      </ArrowLayer>
    </Page>
  );
}
